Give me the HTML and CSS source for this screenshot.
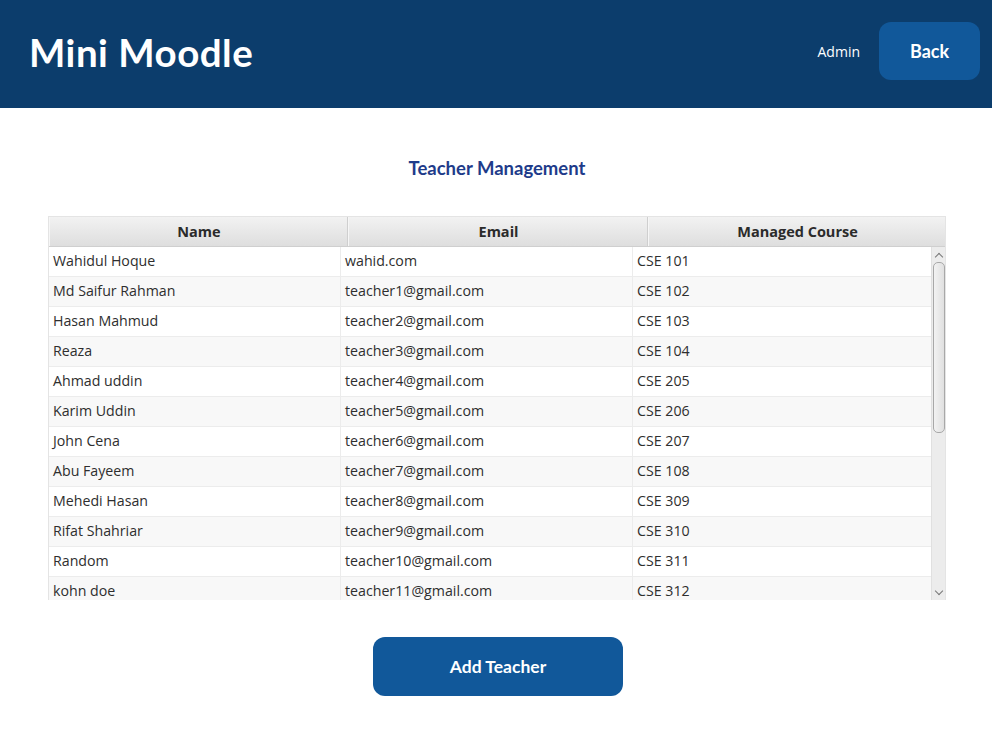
FILE: index.html
```html
<!DOCTYPE html>
<html>
<head>
<meta charset="utf-8">
<link rel="stylesheet" href="styles.css">
</head>
<body>
<header class="topbar">
  <h1 class="brand">Mini Moodle</h1>
  <div class="top-right">
    <span class="user">Admin</span>
    <button class="btn back">Back</button>
  </div>
</header>
<main class="content">
  <h2 class="page-title">Teacher Management</h2>
  <div class="table">
    <div class="thead">
      <div class="th">Name</div>
      <div class="th">Email</div>
      <div class="th">Managed Course</div>
    </div>
    <div class="tbody-wrap">
      <div class="tbody">
        <div class="tr"><div class="td">Wahidul Hoque</div><div class="td">wahid.com</div><div class="td">CSE 101</div></div>
        <div class="tr"><div class="td">Md Saifur Rahman</div><div class="td">teacher1@gmail.com</div><div class="td">CSE 102</div></div>
        <div class="tr"><div class="td">Hasan Mahmud</div><div class="td">teacher2@gmail.com</div><div class="td">CSE 103</div></div>
        <div class="tr"><div class="td">Reaza</div><div class="td">teacher3@gmail.com</div><div class="td">CSE 104</div></div>
        <div class="tr"><div class="td">Ahmad uddin</div><div class="td">teacher4@gmail.com</div><div class="td">CSE 205</div></div>
        <div class="tr"><div class="td">Karim Uddin</div><div class="td">teacher5@gmail.com</div><div class="td">CSE 206</div></div>
        <div class="tr"><div class="td">John Cena</div><div class="td">teacher6@gmail.com</div><div class="td">CSE 207</div></div>
        <div class="tr"><div class="td">Abu Fayeem</div><div class="td">teacher7@gmail.com</div><div class="td">CSE 108</div></div>
        <div class="tr"><div class="td">Mehedi Hasan</div><div class="td">teacher8@gmail.com</div><div class="td">CSE 309</div></div>
        <div class="tr"><div class="td">Rifat Shahriar</div><div class="td">teacher9@gmail.com</div><div class="td">CSE 310</div></div>
        <div class="tr"><div class="td">Random</div><div class="td">teacher10@gmail.com</div><div class="td">CSE 311</div></div>
        <div class="tr"><div class="td">kohn doe</div><div class="td">teacher11@gmail.com</div><div class="td">CSE 312</div></div>
      </div>
      <div class="scrollbar">
        <div class="arrow up"></div>
        <div class="thumb"></div>
        <div class="arrow down"></div>
      </div>
    </div>
  </div>
  <div class="actions">
    <button class="btn add">Add Teacher</button>
  </div>
</main>
</body>
</html>
```

FILE: styles.css
```css
* { box-sizing: border-box; }
html, body { margin: 0; padding: 0; background: #ffffff; }
body { font-family: "Open Sans", "Noto Sans", sans-serif; width: 992px; height: 737px; overflow: hidden; }

.topbar {
  height: 108px;
  background: #0c3d6c;
  display: flex;
  align-items: center;
  justify-content: space-between;
  padding: 0 12px 0 29px;
}
.brand {
  margin: 0;
  color: #ffffff;
  font-family: "Lato", "DejaVu Sans", sans-serif;
  font-weight: 700;
  font-size: 38.5px;
  letter-spacing: 0.5px;
  position: relative;
  top: -2px;
}
.top-right { display: flex; align-items: center; gap: 19px; position: relative; top: -3px; }
.user { color: #ffffff; font-size: 14px; }
.btn {
  border: none;
  color: #ffffff;
  font-family: "Lato", "DejaVu Sans", sans-serif;
  font-weight: 700;
  cursor: pointer;
}
.back {
  width: 101px;
  height: 58px;
  background: #11589a;
  border-radius: 12px;
  font-size: 18px;
}

.content { padding: 0 46px 0 48px; }
.page-title {
  margin: 0;
  padding-top: 49px;
  height: 108px;
  text-align: center;
  color: #1e3b8a;
  font-family: "Lato", "DejaVu Sans", sans-serif;
  font-weight: 700;
  font-size: 18.5px;
}
.table {
  width: 898px;
  border: 1px solid #e4e4e4;
  border-bottom: none;
}
.thead {
  display: grid;
  grid-template-columns: 299px 300px 1fr;
  height: 30px;
  background: linear-gradient(#f2f2f2, #dedede);
  border-bottom: 1px solid #cfcfcf;
}
.th {
  display: flex;
  align-items: center;
  justify-content: center;
  font-size: 14.5px;
  font-weight: 700;
  color: #2b2b2b;
  border-right: 1px solid #cfcfcf;
  box-shadow: inset 1px 0 0 #f6f6f6;
  padding-left: 2px;
}
.th:last-child { border-right: none; }
.tbody-wrap {
  display: flex;
  height: 353px;
  overflow: hidden;
}
.tbody { flex: 1; }
.tr {
  display: grid;
  grid-template-columns: 292px 292px 1fr;
  height: 30px;
  border-bottom: 1px solid #ececec;
  background: #ffffff;
}
.tr:nth-child(even) { background: #f8f8f8; }
.td {
  display: flex;
  align-items: center;
  padding-left: 4px;
  padding-bottom: 2px;
  font-size: 14.2px;
  color: #2e2e2e;
  border-right: 1px solid #ececec;
  white-space: nowrap;
}
.td:last-child { border-right: none; }

.scrollbar {
  width: 14px;
  background: #ececec;
  border-left: 1px solid #e0e0e0;
  display: flex;
  flex-direction: column;
  align-items: center;
}
.arrow {
  height: 15px;
  width: 100%;
  display: flex;
  align-items: center;
  justify-content: center;
}
.arrow::before {
  content: "";
  width: 5px;
  height: 5px;
  border-left: 1px solid #777;
  border-top: 1px solid #777;
}
.arrow.up::before { transform: rotate(45deg); margin-top: 4px; }
.arrow.down::before { transform: rotate(-135deg); margin-bottom: 4px; }
.thumb {
  width: 12px;
  height: 171px;
  border: 1px solid #a8a8a8;
  border-radius: 5px;
  background: linear-gradient(90deg, #f2f2f2, #e0e0e0);
}
.scrollbar .arrow.down { margin-top: auto; }

.actions {
  display: flex;
  justify-content: center;
  padding-top: 37px;
  padding-left: 2px;
}
.add {
  width: 250px;
  height: 59px;
  background: #11589a;
  border-radius: 12px;
  font-size: 17.5px;
}
```
